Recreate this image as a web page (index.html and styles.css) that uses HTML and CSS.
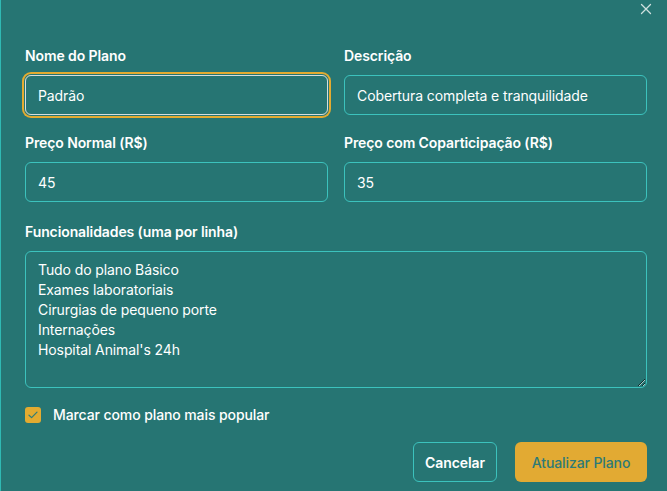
FILE: index.html
```html
<!DOCTYPE html>
<html lang="pt-BR">
<head>
<meta charset="utf-8">
<title>Editar Plano</title>
<link rel="stylesheet" href="styles.css">
</head>
<body>
<div class="dialog">
  <button class="close" type="button" aria-label="Fechar">
    <svg width="12" height="12" viewBox="0 0 12 12"><path d="M1.5 1.5l9 9M10.5 1.5l-9 9" stroke="currentColor" stroke-width="1.3" fill="none" stroke-linecap="round"/></svg>
  </button>
  <form class="form">
    <div class="row two">
      <div class="field">
        <label class="label">Nome do Plano</label>
        <input class="input focused" type="text" value="Padrão">
      </div>
      <div class="field">
        <label class="label">Descrição</label>
        <input class="input" type="text" value="Cobertura completa e tranquilidade">
      </div>
    </div>
    <div class="row two second">
      <div class="field">
        <label class="label">Preço Normal (R$)</label>
        <input class="input" type="text" value="45">
      </div>
      <div class="field">
        <label class="label">Preço com Coparticipação (R$)</label>
        <input class="input" type="text" value="35">
      </div>
    </div>
    <div class="row">
      <div class="field">
        <label class="label">Funcionalidades (uma por linha)</label>
        <textarea class="textarea">Tudo do plano Básico
Exames laboratoriais
Cirurgias de pequeno porte
Internações
Hospital Animal's 24h</textarea>
      </div>
    </div>
    <label class="check">
      <span class="box">
        <svg width="10" height="8" viewBox="0 0 10 8"><path d="M1 4.2l2.6 2.4L9 1.2" stroke="#2d7d7a" stroke-width="1.2" fill="none" stroke-linecap="round" stroke-linejoin="round"/></svg>
      </span>
      <span class="check-text">Marcar como plano mais popular</span>
    </label>
    <div class="actions">
      <button class="btn outline" type="button">Cancelar</button>
      <button class="btn primary" type="button">Atualizar Plano</button>
    </div>
  </form>
</div>
</body>
</html>
```

FILE: styles.css
```css
* { box-sizing: border-box; }
html, body { margin: 0; padding: 0; }
body {
  background: #267573;
  font-family: Inter, "Noto Sans", sans-serif;
  color: #ffffff;
  width: 667px;
  height: 491px;
  overflow: hidden;
}
.dialog {
  position: relative;
  height: 491px;
  border-left: 1px solid #2fb9b3;
  padding: 46px 0 0 24px;
}
.close {
  position: absolute;
  top: 3px;
  right: 15px;
  background: none;
  border: 0;
  padding: 0;
  color: #cfe0df;
  width: 12px;
  height: 12px;
  display: flex;
}
.form {
  width: 622px;
  display: flex;
  flex-direction: column;
}
.row { display: grid; grid-template-columns: 1fr; margin-bottom: 17px; }
.row.two { grid-template-columns: 303px 303px; column-gap: 16px; margin-bottom: 18px; }
.row.two.second { margin-bottom: 20px; }
.field { display: flex; flex-direction: column; }
.label {
  font-size: 14px;
  font-weight: 600;
  line-height: 20px;
  margin-bottom: 9px;
  color: #ffffff;
  letter-spacing: -0.1px;
}
.input, .textarea {
  font-family: Inter, "Noto Sans", sans-serif;
  font-size: 14px;
  color: #ffffff;
  background: transparent;
  border: 1px solid #3cc2bd;
  border-radius: 6px;
  padding: 0 12px;
  height: 40px;
  outline: none;
  letter-spacing: -0.1px;
}
.input.focused {
  border-color: #d5dede;
  box-shadow: 0 0 0 1px #267573, 0 0 0 3px #e3ab30;
}
.textarea {
  height: 137px;
  padding: 8px 12px;
  line-height: 20px;
  resize: vertical;
}
.check {
  display: flex;
  align-items: center;
  gap: 12px;
  height: 20px;
}
.box {
  width: 16px;
  height: 16px;
  border-radius: 3px;
  background: #e3ab30;
  display: flex;
  align-items: center;
  justify-content: center;
}
.check-text {
  font-size: 14px;
  font-weight: 500;
  line-height: 20px;
  letter-spacing: -0.1px;
}
.actions {
  display: flex;
  justify-content: flex-end;
  gap: 18px;
  margin-top: 17px;
}
.btn {
  font-family: Inter, "Noto Sans", sans-serif;
  font-size: 14px;
  height: 40px;
  border-radius: 6px;
  padding: 0;
  white-space: nowrap;
  letter-spacing: -0.1px;
}
.btn.outline {
  background: transparent;
  border: 1px solid #3cc2bd;
  color: #ffffff;
  font-weight: 600;
  width: 84px;
}
.btn.primary {
  background: #e2aa33;
  border: 0;
  color: #2e7a77;
  font-weight: 500;
  width: 132px;
}
```
